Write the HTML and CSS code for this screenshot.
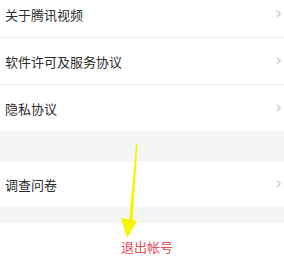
FILE: index.html
```html
<!DOCTYPE html>
<html lang="zh">
<head>
<meta charset="utf-8">
<link rel="stylesheet" href="styles.css">
</head>
<body>
<div class="page">
  <div class="group">
    <div class="row first"><span class="label">关于腾讯视频</span><span class="chev">›</span></div>
    <div class="row"><span class="label">软件许可及服务协议</span><span class="chev">›</span></div>
    <div class="row last"><span class="label">隐私协议</span><span class="chev">›</span></div>
  </div>
  <div class="gap big"></div>
  <div class="group">
    <div class="row last single"><span class="label">调查问卷</span><span class="chev">›</span></div>
  </div>
  <div class="gap small"></div>
  <div class="logout">退出帐号</div>
  <svg class="arrow" width="284" height="270" viewBox="0 0 284 270">
    <polygon points="137.5,144 136,144 129,222 132.5,222" fill="#f5f500"/>
    <polygon points="121,218 137,221 127,238" fill="#f5f500"/>
  </svg>
</div>
</body>
</html>
```

FILE: styles.css
```css
* { box-sizing: border-box; margin: 0; padding: 0; }
html, body { width: 284px; height: 270px; overflow: hidden; background: #fff; }
body {
  font-family: "Noto Sans CJK SC", "Noto Sans", sans-serif;
  color: #2b2b2b;
}
.page { position: relative; width: 284px; height: 270px; display: flex; flex-direction: column; }
.group { background: #fff; }
.row {
  height: 47px;
  display: flex;
  align-items: center;
  justify-content: space-between;
  padding: 0 2px 0 5px;
  border-bottom: 1px solid #ececec;
  font-size: 13px;
}
.row.first { height: 38px; padding-top: 8px; padding-bottom: 8px; align-items: flex-start; }
.row.first .label { line-height: 14px; }
.row.first .chev { line-height: 14px; }
.row.last { border-bottom: none; height: 46px; }
.row.single { height: 45px; }
.label { line-height: 1; }
.chev {
  color: #cbcbcb;
  font-family: "DejaVu Sans", sans-serif;
  font-size: 17px;
  line-height: 1;
  margin-top: -2px;
}
.gap { background: #f4f5f7; }
.gap.big { height: 31px; }
.gap.small { height: 16px; }
.logout {
  height: 46px;
  display: flex;
  align-items: center;
  justify-content: center;
  color: #e44d55;
  font-size: 13px;
  padding-left: 10px;
}
.arrow { position: absolute; left: 0; top: 0; pointer-events: none; }
```
